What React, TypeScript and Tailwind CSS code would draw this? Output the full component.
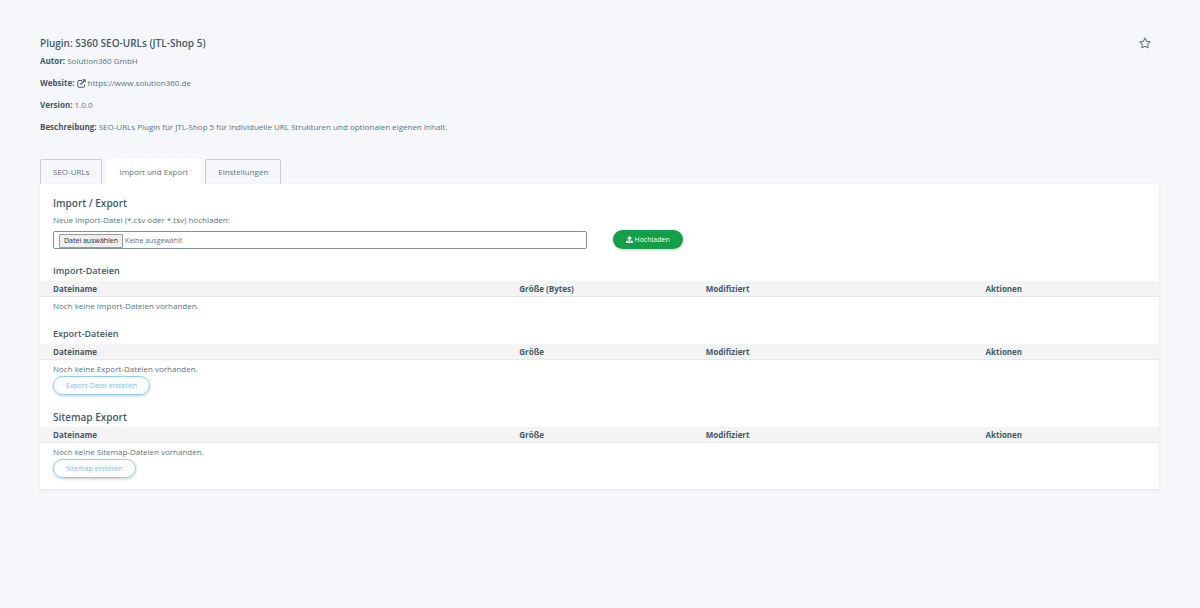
import { FaRegStar, FaUpload } from "react-icons/fa"
import { useState } from "react"

const TABS = ["SEO-URLs", "Import und Export", "Einstellungen"]

export default function App() {
  const [tab, setTab] = useState("Import und Export")

  return (
    <div className="min-h-screen bg-[#f5f7fb] pl-10 pr-[41px] pt-[35px] pb-10 font-['Open_Sans',sans-serif] text-[8px] leading-3 text-[#5c7480]">
      <header className="flex items-start justify-between">
        <div>
          <h1 className="text-[10px] leading-4 font-semibold text-[#435a6b]">Plugin: S360 SEO-URLs (JTL-Shop 5)</h1>
          <div className="mt-1 space-y-[10px]">
            <p><Term>Autor:</Term> Solution360 GmbH</p>
            <p>
              <Term>Website:</Term>{" "}
              <a href="https://www.solution360.de">
                <LinkIcon /> https://www.solution360.de
              </a>
            </p>
            <p><Term>Version:</Term> 1.0.0</p>
            <p><Term>Beschreibung:</Term> SEO-URLs Plugin für JTL-Shop 5 für individuelle URL Strukturen und optionalen eigenen Inhalt.</p>
          </div>
        </div>
        <button type="button" aria-label="Favorit" className="mr-2 mt-[2px] text-[#5c7480]">
          <FaRegStar size={12} />
        </button>
      </header>

      <nav className="mt-[26px] flex gap-1">
        {TABS.map(name => (
          <button
            key={name}
            type="button"
            onClick={() => setTab(name)}
            className={`h-[25px] rounded-t-[2px] border border-b-0 px-3 ${
              name === tab ? "border-white bg-white" : "border-[#c9ced6]"
            }`}
          >
            {name}
          </button>
        ))}
      </nav>

      <main className="bg-white pb-[11px] pt-3 shadow-[0_1px_3px_rgba(60,80,110,0.1)]">
        <h2 className="px-[13px] text-[10px] leading-[14px] font-semibold text-[#435a6b]">Import / Export</h2>
        <form className="mt-1" onSubmit={e => e.preventDefault()}>
          <label htmlFor="import-file" className="block px-[13px]">Neue Import-Datei (*.csv oder *.tsv) hochladen:</label>
          <div className="mt-1 grid grid-cols-2 items-center">
            <div className="px-[13px]">
              <label className="flex h-[18px] items-end rounded-[2px] border border-[#7c93a5] px-[5px] text-[7px]">
                <input id="import-file" type="file" className="sr-only" />
                <span className="flex h-[14px] items-center rounded-[1px] border border-[#9a9a9a] bg-[#efefef] px-1 text-[#222c3a]">
                  Datei auswählen
                </span>
                <span className="flex h-[14px] items-center pl-[2px]">Keine ausgewählt</span>
              </label>
            </div>
            <div className="px-[13px]">
              <button type="submit" className="flex h-[19px] items-center gap-[2px] rounded-full bg-[#139f48] px-[13px] text-[7px] text-white shadow-[0_1px_3px_rgba(0,0,0,0.2)]">
                <FaUpload size={7} />
                Hochladen
              </button>
            </div>
          </div>
        </form>

        <section className="mt-4">
          <h3 className="px-[13px] text-[9px] leading-3 font-semibold text-[#435a6b]">Import-Dateien</h3>
          <FileTable size="Größe (Bytes)" empty="Noch keine Import-Dateien vorhanden." />
        </section>

        <section className="mt-4">
          <h3 className="px-[13px] text-[9px] leading-3 font-semibold text-[#435a6b]">Export-Dateien</h3>
          <FileTable size="Größe" empty="Noch keine Export-Dateien vorhanden." />
          <CreateButton>Export-Datei erstellen</CreateButton>
        </section>

        <section className="mt-4">
          <h2 className="px-[13px] text-[10px] leading-3 font-semibold text-[#435a6b]">Sitemap Export</h2>
          <FileTable size="Größe" empty="Noch keine Sitemap-Dateien vorhanden." />
          <CreateButton>Sitemap erstellen</CreateButton>
        </section>
      </main>
    </div>
  )
}

function Term({ children }: { children: React.ReactNode }) {
  return <strong className="font-bold text-[#435a6b]">{children}</strong>
}

function LinkIcon() {
  return (
    <svg viewBox="0 0 18 18" className="inline size-[9px] text-[#435a6b]" fill="none" stroke="currentColor" strokeWidth="2">
      <path d="M10 3H3.500A2 2 0 0 0 1.500 5v9.500a2 2 0 0 0 2 2h9.500a2 2 0 0 0 2-2V11" />
      <path d="M7 11 14 4" strokeWidth="2.800" />
      <path d="M10.500 .5h7v7z" fill="currentColor" stroke="none" />
    </svg>
  )
}

function FileTable({ size, empty }: { size: string; empty: string }) {
  return (
    <table className="mt-1 w-full table-fixed text-left">
      <thead className="border-b border-[#e6e8ea] bg-[#f4f4f4] leading-[11px] text-[#435a6b]">
        <tr>
          <th className="w-5/12 px-[13px] py-[2px] font-bold">Dateiname</th>
          <th className="w-2/12 px-[13px] py-[2px] font-bold">{size}</th>
          <th className="w-3/12 px-[13px] py-[2px] font-bold">Modifiziert</th>
          <th className="w-2/12 px-[13px] py-[2px] font-bold">Aktionen</th>
        </tr>
      </thead>
      <tbody>
        <tr>
          <td colSpan={4} className="px-[13px] pt-[3px]">{empty}</td>
        </tr>
      </tbody>
    </table>
  )
}

function CreateButton({ children }: { children: React.ReactNode }) {
  return (
    <button type="button" className="ml-[13px] mt-px block h-[19px] rounded-full border border-[#8fcdf5] px-3 text-[7px] text-[#7cc0ef] shadow-[0_1px_3px_rgba(60,80,110,0.3)]">
      {children}
    </button>
  )
}
